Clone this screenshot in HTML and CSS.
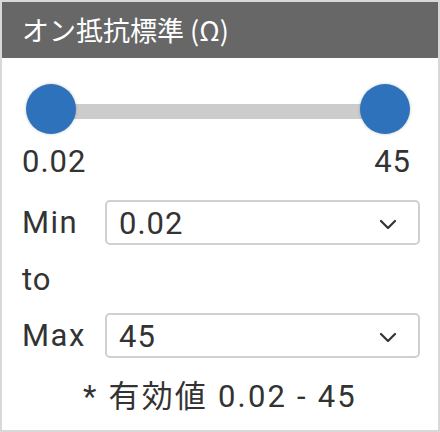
FILE: index.html
```html
<!DOCTYPE html>
<html lang="ja">
<head>
<meta charset="utf-8">
<link rel="stylesheet" href="styles.css">
</head>
<body>
<div class="panel">
  <div class="header">オン抵抗標準 (Ω)</div>
  <div class="body">
    <div class="slider">
      <div class="knob"></div>
      <div class="track"></div>
      <div class="knob"></div>
    </div>
    <div class="ends">
      <span>0.02</span>
      <span>45</span>
    </div>
    <div class="row row-min">
      <span class="label">Min</span>
      <div class="select">
        <span class="value">0.02</span>
        <svg class="chev" width="18" height="11" viewBox="0 0 18 11"><path d="M2 2 L9 9 L16 2" fill="none" stroke="#333" stroke-width="2.2" stroke-linecap="round" stroke-linejoin="round"/></svg>
      </div>
    </div>
    <div class="to">to</div>
    <div class="row row-max">
      <span class="label">Max</span>
      <div class="select">
        <span class="value">45</span>
        <svg class="chev" width="18" height="11" viewBox="0 0 18 11"><path d="M2 2 L9 9 L16 2" fill="none" stroke="#333" stroke-width="2.2" stroke-linecap="round" stroke-linejoin="round"/></svg>
      </div>
    </div>
    <div class="note">* 有効値 0.02 - 45</div>
  </div>
</div>
</body>
</html>
```
FILE: styles.css
```css
html, body {
  margin: 0;
  padding: 0;
  background: #ffffff;
}
.panel {
  width: 440px;
  height: 432px;
  box-sizing: border-box;
  border: 2px solid #d9d9d9;
  font-family: Roboto, "Noto Sans CJK JP", sans-serif;
  color: #333333;
  display: flex;
  flex-direction: column;
}
.header {
  height: 56px;
  background: #666766;
  color: #ffffff;
  font-family: "Noto Sans CJK JP", Roboto, sans-serif;
  font-size: 27px;
  line-height: 56px;
  padding-left: 20px;
  flex: none;
}
.body {
  display: flex;
  flex-direction: column;
  padding: 0 20px 0 20px;
}
.slider {
  margin-top: 26px;
  height: 50px;
  display: flex;
  align-items: center;
  padding: 0 8px 0 4px;
}
.knob {
  width: 50px;
  height: 50px;
  border-radius: 50%;
  background: #2e72bb;
  box-shadow: 0 0 3px rgba(0, 0, 0, 0.25);
  flex: none;
  position: relative;
  z-index: 1;
}
.track {
  flex: 1;
  height: 15px;
  margin: 5px -2px 0 -2px;
  background: #cccccc;
}
.ends {
  margin-top: 10px;
  display: flex;
  justify-content: space-between;
  font-size: 31px;
  letter-spacing: 1px;
  line-height: 36px;
  padding-right: 7px;
}
.row {
  display: flex;
  align-items: center;
  height: 45px;
}
.row-min {
  margin-top: 20px;
}
.row-max {
  margin-top: 15px;
}
.label {
  width: 83px;
  font-size: 31px;
  letter-spacing: 1.5px;
  line-height: 36px;
  flex: none;
}
.select {
  flex: none;
  width: 315px;
  height: 45px;
  box-sizing: border-box;
  border: 2px solid #d0d0d0;
  border-radius: 5px;
  display: flex;
  align-items: center;
  justify-content: space-between;
  padding: 0 21px 0 12px;
}
.value {
  font-size: 31px;
  letter-spacing: 1px;
  line-height: 36px;
  padding-top: 3px;
}
.chev {
  display: block;
  margin-top: 3px;
}
.to {
  margin-top: 17px;
  font-size: 31px;
  letter-spacing: 1px;
  line-height: 36px;
}
.note {
  margin-top: 21px;
  text-align: center;
  font-size: 31px;
  letter-spacing: 2.2px;
  line-height: 36px;
}
```
